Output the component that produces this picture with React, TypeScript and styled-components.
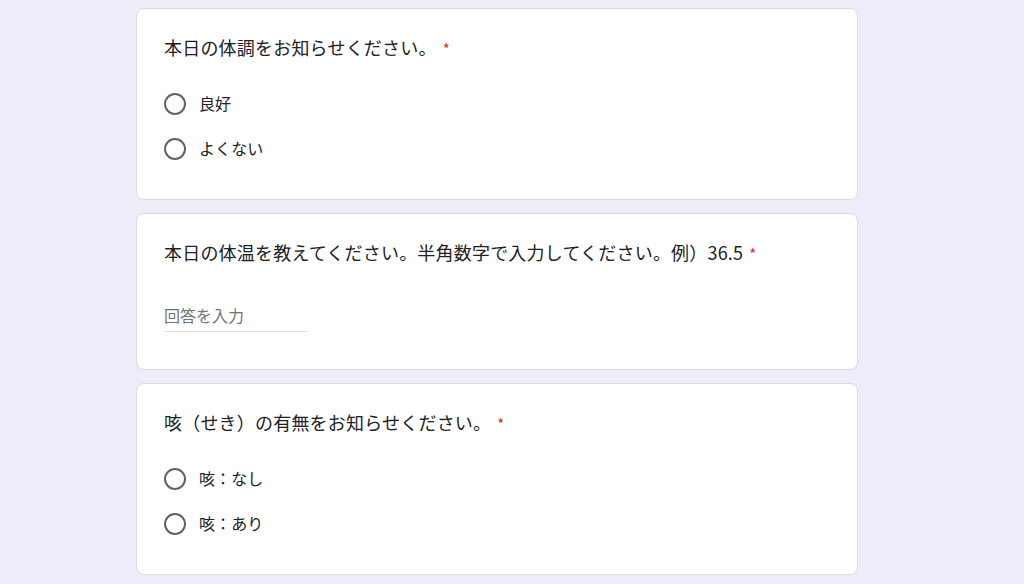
import * as React from 'react';
import styled, { createGlobalStyle } from 'styled-components';

const Global = createGlobalStyle`
  html, body {
    margin: 0;
    padding: 0;
    background-color: #f0ebf8;
  }
  body {
    font-family: "Noto Sans CJK JP", "Noto Sans", sans-serif;
    color: #202124;
  }
`;

const Page = styled.div`
  width: 100vw;
  height: 584px;
  overflow: hidden;
  padding: 8px 0 0 136px;
  box-sizing: border-box;
`;

const Column = styled.div`
  width: 722px;
  display: flex;
  flex-direction: column;
  gap: 13px;
`;

const Card = styled.div<{ $bottom: number }>`
  background-color: #ffffff;
  border: 1px solid #dadce0;
  border-radius: 8px;
  padding: 26px 24px ${(p) => p.$bottom}px 27px;
  box-sizing: border-box;
`;

const Title = styled.div`
  font-size: 18px;
  line-height: 24px;
  height: 24px;
  white-space: nowrap;
  letter-spacing: 0.2px;
`;

const Required = styled.span`
  color: #d93025;
  font-size: 15px;
  padding-left: 6px;
`;

const Options = styled.div`
  margin-top: 22px;
  display: flex;
  flex-direction: column;
`;

const Option = styled.label`
  display: flex;
  align-items: center;
  height: 45px;
  gap: 13px;
  font-size: 16px;
  letter-spacing: 0.1px;
  cursor: pointer;
`;

const Radio = styled.span`
  width: 22px;
  height: 22px;
  border: 2.5px solid #5f6368;
  border-radius: 50%;
  box-sizing: border-box;
  flex: none;
  margin-top: 1px;
`;

const Label = styled.span`
  margin-top: -2px;
`;

const Answer = styled.input`
  display: block;
  margin-top: 35px;
  width: 144px;
  height: 32px;
  padding: 0;
  border: none;
  border-bottom: 1px solid #e0e0e0;
  outline: none;
  font-family: "Noto Sans CJK JP", sans-serif;
  font-size: 16px;
  color: #202124;
  background: transparent;
  &::placeholder {
    color: #70757a;
  }
`;

function Choice({ question, options, bottom }: { question: string; options: string[]; bottom: number }) {
  return (
    <Card $bottom={bottom}>
      <Title>
        {question}
        <Required>*</Required>
      </Title>
      <Options>
        {options.map((o) => (
          <Option key={o}>
            <Radio />
            <Label>{o}</Label>
          </Option>
        ))}
      </Options>
    </Card>
  );
}

export default function App() {
  return (
    <>
      <Global />
      <Page>
        <Column>
          <Choice question="本日の体調をお知らせください。" options={['良好', 'よくない']} bottom={28} />
          <Card $bottom={37}>
            <Title>
              本日の体温を教えてください。半角数字で入力してください。例）36.5
              <Required>*</Required>
            </Title>
            <Answer placeholder="回答を入力" />
          </Card>
          <Choice question="咳（せき）の有無をお知らせください。" options={['咳：なし', '咳：あり']} bottom={28} />
        </Column>
      </Page>
    </>
  );
}
